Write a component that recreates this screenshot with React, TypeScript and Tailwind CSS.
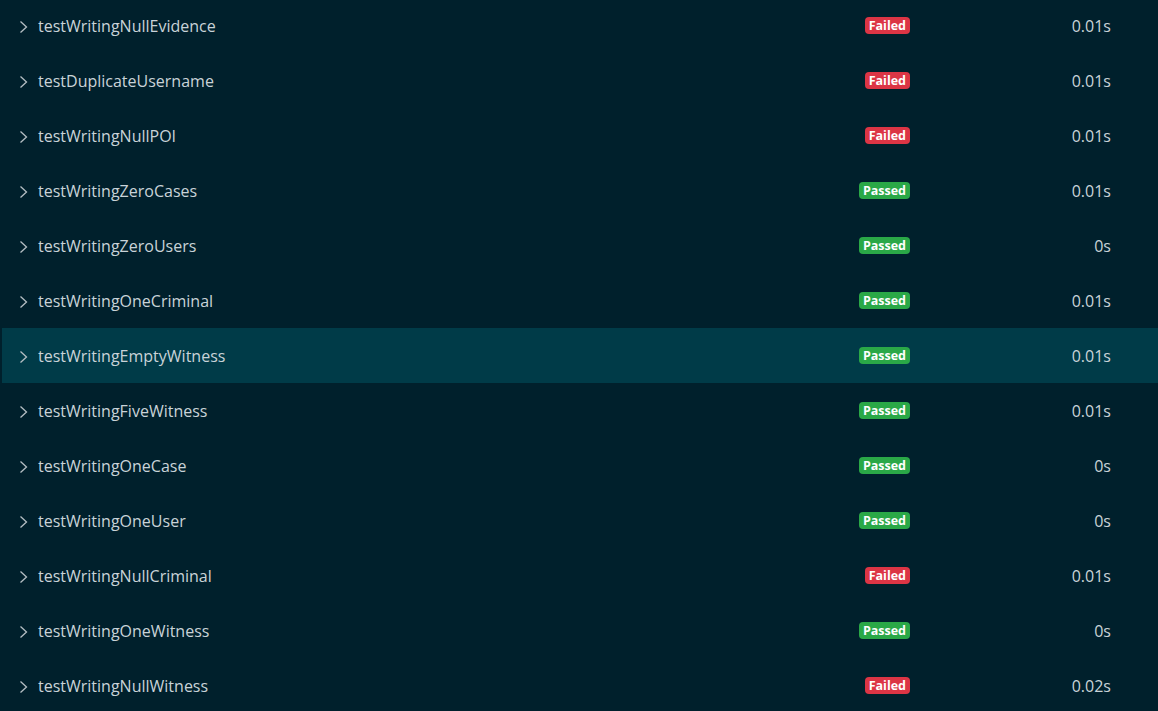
const tests = [
  { name: 'testWritingNullEvidence', passed: false, time: '0.01s' },
  { name: 'testDuplicateUsername', passed: false, time: '0.01s' },
  { name: 'testWritingNullPOI', passed: false, time: '0.01s' },
  { name: 'testWritingZeroCases', passed: true, time: '0.01s' },
  { name: 'testWritingZeroUsers', passed: true, time: '0s' },
  { name: 'testWritingOneCriminal', passed: true, time: '0.01s' },
  { name: 'testWritingEmptyWitness', passed: true, time: '0.01s', active: true },
  { name: 'testWritingFiveWitness', passed: true, time: '0.01s' },
  { name: 'testWritingOneCase', passed: true, time: '0s' },
  { name: 'testWritingOneUser', passed: true, time: '0s' },
  { name: 'testWritingNullCriminal', passed: false, time: '0.01s' },
  { name: 'testWritingOneWitness', passed: true, time: '0s' },
  { name: 'testWritingNullWitness', passed: false, time: '0.02s' },
]

const Chevron = () => (
  <svg width="10" height="14" viewBox="0 0 10 14" fill="none" className="shrink-0">
    <path d="M1.5 1.5 L7.5 7 L1.5 12.5" stroke="#b4bec3" strokeWidth="1.3" />
  </svg>
)

export default function App() {
  return (
    <div
      className="h-[711px] w-full overflow-hidden bg-[#00202c] text-[#c9d3d8]"
      style={{ fontFamily: '"Open Sans", "Noto Sans", sans-serif' }}
    >
      <div className="-mt-[2px] flex flex-col">
        {tests.map((t) => (
          <div
            key={t.name}
            className={`ml-[2px] flex h-[55px] items-center ${t.active ? 'bg-[#003b48]' : ''}`}
          >
            <div className="flex w-[36px] justify-end pr-[9px] pt-[3px]">
              <Chevron />
            </div>
            <div className="flex-1 text-[16px]">{t.name}</div>
            <div className="flex w-[100px] justify-end">
              {t.passed ? (
                <span className="rounded-[4px] bg-[#2aa847] px-[4px] text-[12.5px] font-bold leading-[17px] text-white">
                  Passed
                </span>
              ) : (
                <span className="rounded-[4px] bg-[#dc3545] px-[4px] text-[12.5px] font-bold leading-[17px] text-white">
                  Failed
                </span>
              )}
            </div>
            <div className="w-[248px] pr-[47px] text-right text-[16px]">{t.time}</div>
          </div>
        ))}
      </div>
    </div>
  )
}
